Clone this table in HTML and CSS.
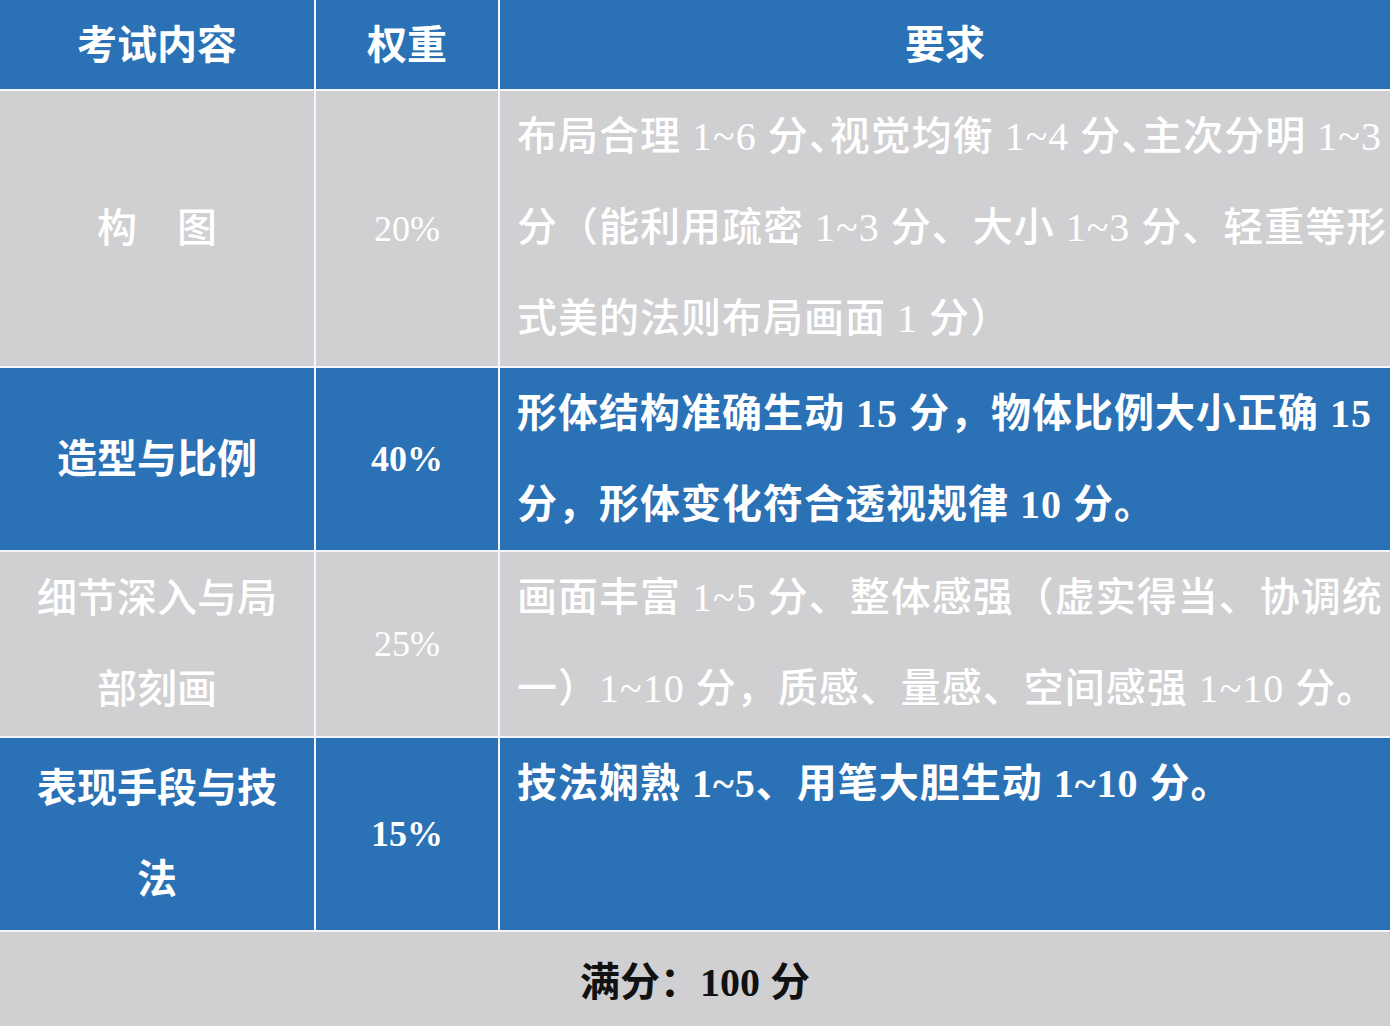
FILE: index.html
```html
<!DOCTYPE html>
<html lang="zh-CN">
<head>
<meta charset="utf-8">
<title>考试内容</title>
<link rel="stylesheet" href="styles.css">
</head>
<body>
<div class="table">
  <div class="cell blue head">考试内容</div>
  <div class="cell blue head">权重</div>
  <div class="cell blue head">要求</div>

  <div class="cell gray name">构　图</div>
  <div class="cell gray pct">20%</div>
  <div class="cell gray req">布局合理 1~6 分<span class="tight">、</span>视觉均衡 1~4 分<span class="tight">、</span>主次分明 1~3<br>分（能利用疏密 1~3 分、大小 1~3 分、轻重等形<br>式美的法则布局画面 1 分）</div>

  <div class="cell blue name">造型与比例</div>
  <div class="cell blue pct">40%</div>
  <div class="cell blue req">形体结构准确生动 15 分，物体比例大小正确 15<br>分，形体变化符合透视规律 10 分。</div>

  <div class="cell gray name">细节深入与局部刻画</div>
  <div class="cell gray pct">25%</div>
  <div class="cell gray req">画面丰富 1~5 分、整体感强（虚实得当、协调统<br>一）1~10 分，质感、量感、空间感强 1~10 分。</div>

  <div class="cell blue name">表现手段与技法</div>
  <div class="cell blue pct">15%</div>
  <div class="cell blue req">技法娴熟 1~5、用笔大胆生动 1~10 分。</div>

  <div class="cell gray total">满分：100 分</div>
</div>
</body>
</html>
```
FILE: styles.css
```css
* { box-sizing: border-box; }
html, body { margin: 0; padding: 0; background: #ffffff; }
body {
  width: 1390px;
  height: 1026px;
  overflow: hidden;
  font-family: "Liberation Serif", "Noto Sans CJK SC", serif;
  font-size: 40px;
}
.table {
  display: grid;
  grid-template-columns: 314px 182px 890px;
  grid-template-rows: 89px 275px 182px 184px 192px 94px;
  column-gap: 2px;
  row-gap: 2px;
  background: #f4f7fb;
  width: 1390px;
  height: 1026px;
}
.cell {
  color: #ffffff;
  display: flex;
  align-items: center;
  justify-content: center;
  text-align: center;
}
.blue { background: #2a71b6; font-weight: 700; }
.gray { background: #d0d0d2; font-weight: 500; }
.head {
  font-size: 40px;
  padding-bottom: 5px;
}
.name {
  padding: 0 30px;
  line-height: 91px;
}
.pct {
  font-size: 36px;
}
.req {
  display: block;
  text-align: left;
  padding: 0 0 0 17px;
  line-height: 91px;
  letter-spacing: 1px;
  white-space: nowrap;
}
.tight {
  letter-spacing: -19px;
}
.total {
  grid-column: 1 / 4;
  color: #111111;
  font-weight: 700;
}
```
